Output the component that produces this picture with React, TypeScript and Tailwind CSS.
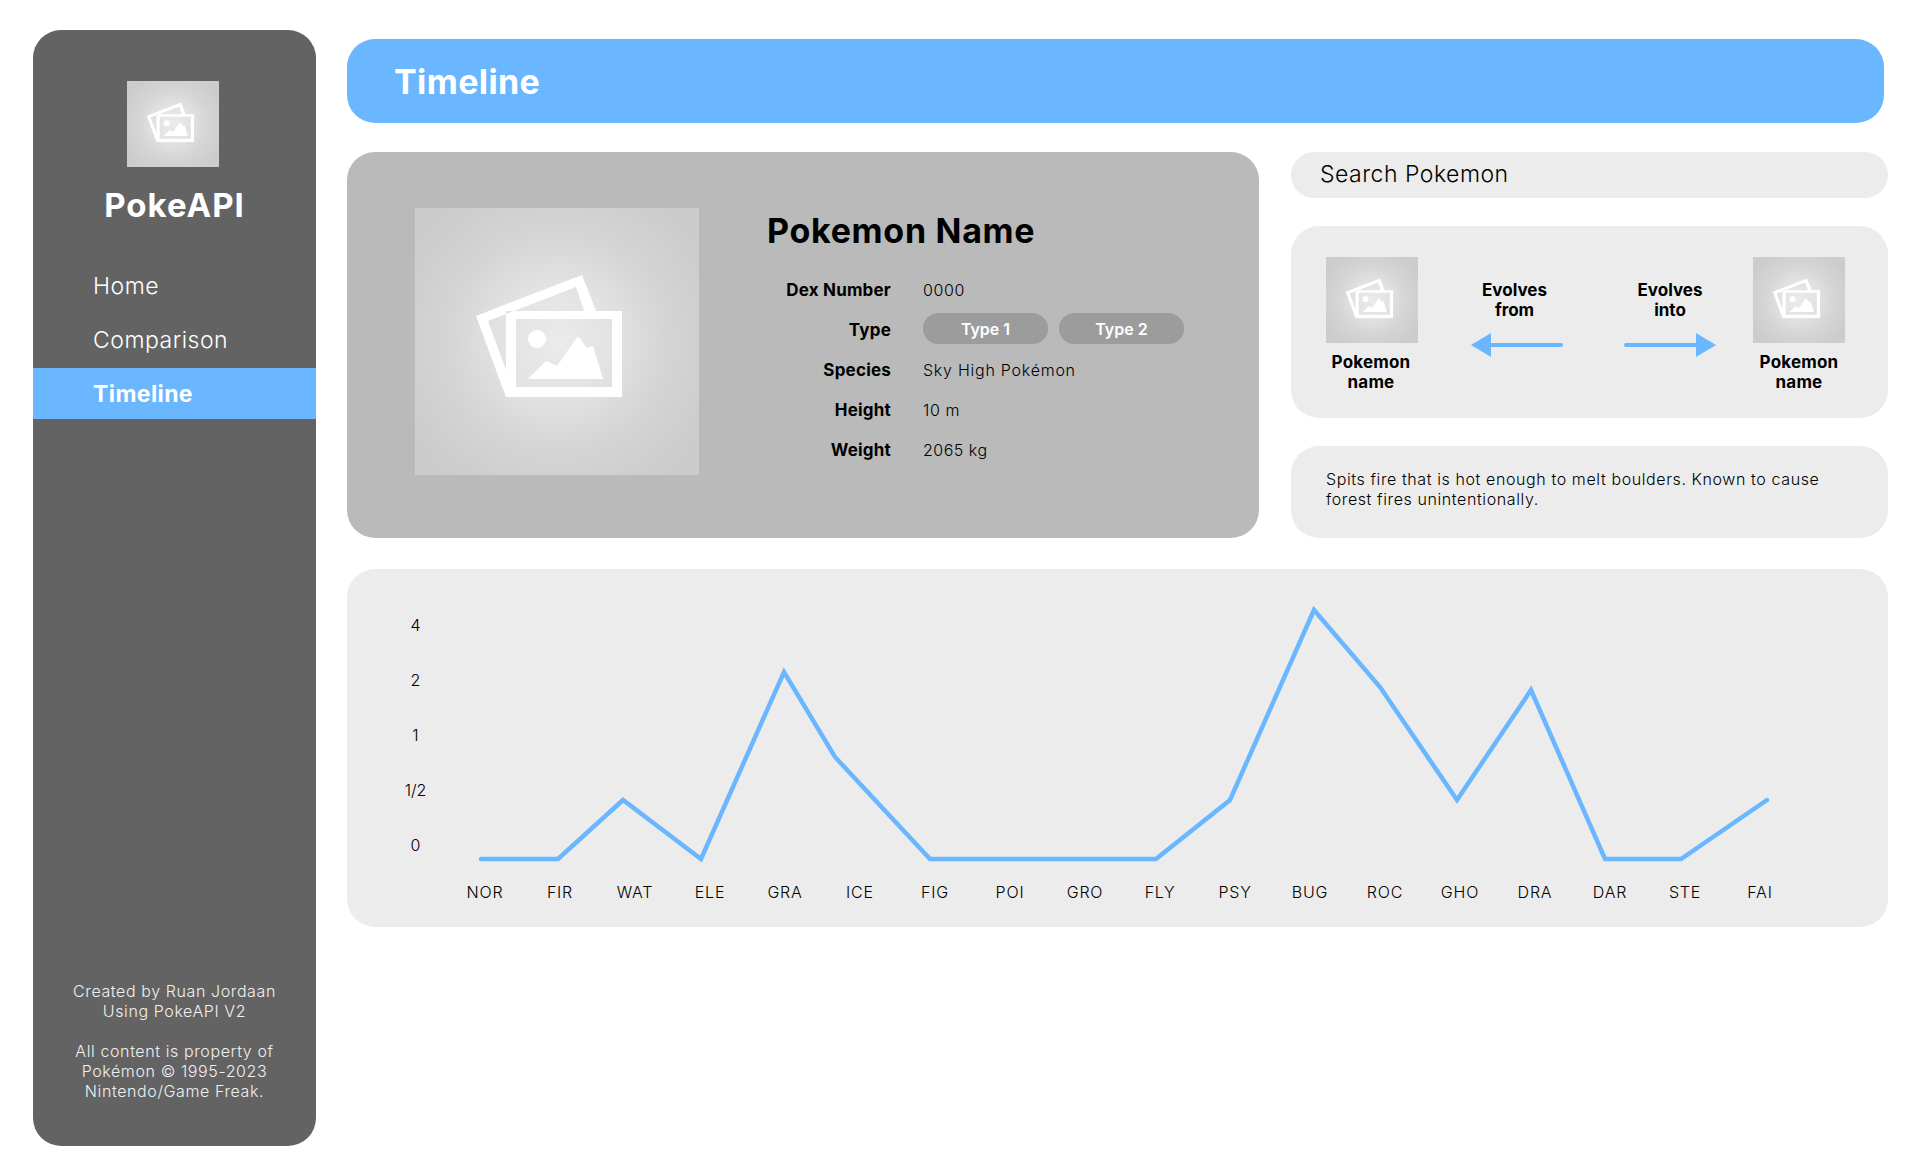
const types = ['NOR', 'FIR', 'WAT', 'ELE', 'GRA', 'ICE', 'FIG', 'POI', 'GRO', 'FLY', 'PSY', 'BUG', 'ROC', 'GHO', 'DRA', 'DAR', 'STE', 'FAI']

// x is page x - 470, y is page y - 600
const linePoints = '11,259 88,259 153,200 231,259 314,72 365,157 460,259 686,259 760,200 844,10 910,87 987,200 1061,90 1135,259 1211,259 1297,200'

function ImagePlaceholder({ className }: { className: string }) {
  return (
    <div className={`shrink-0 bg-[radial-gradient(circle_at_center,#ebebeb_0%,#e2e2e2_30%,#d5d5d5_55%,#cccccc_85%)] ${className}`}>
      <svg viewBox="0 0 284 267" preserveAspectRatio="none" className="block w-full h-full">
        <path
          fill="#ffffff"
          fillRule="evenodd"
          d="M61 108 167 67 181 103H207V189H91ZM73 113 91 162V103H169L161 79ZM101 111V179H197V111Z"
        />
        <circle cx="122" cy="131" r="9" fill="#ffffff" />
        <path fill="#ffffff" d="M113 171 131 153 142 158 163 128 172 140 178 138 188 171Z" />
      </svg>
    </div>
  )
}

function Arrow({ flip }: { flip?: boolean }) {
  return (
    <svg viewBox="0 0 92 24" className={`block w-[92px] h-[24px] ${flip ? '-scale-x-100' : ''}`}>
      <path d="M2 12H74" stroke="#6ab7ff" strokeWidth="4" strokeLinecap="round" />
      <path d="M72 0 92 12 72 24Z" fill="#6ab7ff" />
    </svg>
  )
}

function Sidebar() {
  return (
    <aside className="flex flex-col shrink-0 w-[283px] h-[1116px] mt-[30px] ml-[33px] rounded-[28px] bg-[#636363] overflow-hidden text-white">
      <ImagePlaceholder className="w-[92px] h-[86px] mt-[51px] ml-[94px]" />
      <h1 className="mt-[20px] text-center text-[33px] leading-[36px] font-bold tracking-[1px]">PokeAPI</h1>
      <nav className="mt-[37px] flex flex-col gap-[3px] text-[23px]">
        <a className="flex items-center h-[51px] pt-[2px] pl-[60px] font-light tracking-[0.5px]">Home</a>
        <a className="flex items-center h-[51px] pt-[2px] pl-[60px] font-light tracking-[0.5px]">Comparison</a>
        <a className="flex items-center h-[51px] pt-[2px] pl-[60px] bg-[#6ab7ff] font-bold tracking-[0.4px]">Timeline</a>
      </nav>
      <footer className="mt-auto pb-[45px] text-center text-[16px] leading-[20px] text-[#f0f0f0] font-light tracking-[0.6px]">
        <p>Created by Ruan Jordaan<br />Using PokeAPI V2</p>
        <p className="mt-[20px]">All content is property of<br />Pokémon © 1995-2023<br />Nintendo/Game Freak.</p>
      </footer>
    </aside>
  )
}

function InfoRow({ label, children }: { label: string; children: React.ReactNode }) {
  return (
    <div className="flex items-center h-[40px] gap-[32px] text-[16px]">
      <span className="w-[124px] pt-[2px] text-right text-[17px] font-bold tracking-[0.2px]">{label}</span>
      {children}
    </div>
  )
}

function PokemonCard() {
  return (
    <section className="flex w-[912px] h-[386px] pl-[68px] pt-[56px] rounded-[28px] bg-[#bababa] text-black">
      <ImagePlaceholder className="w-[284px] h-[267px]" />
      <div className="ml-[68px] pt-[3px]">
        <h2 className="text-[34px] leading-[40px] font-bold tracking-[0.7px]">Pokemon Name</h2>
        <div className="mt-[19px]">
          <InfoRow label="Dex Number"><span className="font-light tracking-[0.6px]">0000</span></InfoRow>
          <InfoRow label="Type">
            <div className="flex gap-[11px] -mt-[3px]">
              <span className="flex items-center justify-center w-[125px] h-[31px] rounded-full bg-[#9c9c9c] text-white text-[16px] font-semibold">Type 1</span>
              <span className="flex items-center justify-center w-[125px] h-[31px] rounded-full bg-[#9c9c9c] text-white text-[16px] font-semibold">Type 2</span>
            </div>
          </InfoRow>
          <InfoRow label="Species"><span className="font-light tracking-[0.75px]">Sky High Pokémon</span></InfoRow>
          <InfoRow label="Height"><span className="font-light tracking-[0.6px]">10 m</span></InfoRow>
          <InfoRow label="Weight"><span className="font-light tracking-[0.5px]">2065 kg</span></InfoRow>
        </div>
      </div>
    </section>
  )
}

function PokemonName() {
  return (
    <p className="mt-[9px] text-center text-[17px] leading-[20px] font-bold tracking-[0.2px]">Pokemon<br />name</p>
  )
}

function RightColumn() {
  return (
    <div className="flex flex-col gap-[28px] w-[597px] text-black">
      <div className="flex items-center h-[46px] pl-[29px] pb-[2px] rounded-full bg-[#ececec] text-[23px] font-light tracking-[0.5px]">
        Search Pokemon
      </div>
      <div className="flex h-[192px] pl-[35px] pt-[31px] rounded-[28px] bg-[#ececec]">
        <div className="w-[92px] pr-[2px]">
          <ImagePlaceholder className="w-[92px] h-[86px]" />
          <PokemonName />
        </div>
        <div className="ml-[53px] w-[92px] pt-[23px]">
          <p className="pr-[5px] text-center text-[17px] leading-[20px] font-bold">Evolves<br />from</p>
          <div className="mt-[13px]"><Arrow flip /></div>
        </div>
        <div className="ml-[61px] w-[92px] pt-[23px]">
          <p className="text-center text-[17px] leading-[20px] font-bold">Evolves<br />into</p>
          <div className="mt-[13px]"><Arrow /></div>
        </div>
        <div className="ml-[37px] w-[92px]">
          <ImagePlaceholder className="w-[92px] h-[86px]" />
          <PokemonName />
        </div>
      </div>
      <div className="flex items-center h-[92px] px-[35px] pb-[6px] rounded-[28px] bg-[#ececec] text-[16px] leading-[20px] font-light tracking-[0.6px]">
        <p>Spits fire that is hot enough to melt boulders. Known to cause<br />forest fires unintentionally.</p>
      </div>
    </div>
  )
}

function WeaknessChart() {
  return (
    <section className="mt-[31px] w-[1541px] h-[358px] rounded-[28px] bg-[#ececec] text-black text-[16px] font-light">
      <div className="flex h-[313px]">
        <div className="flex flex-col items-center gap-[35px] w-[123px] pl-[14px] pt-[46px] shrink-0 leading-[20px]">
          <span>4</span>
          <span>2</span>
          <span>1</span>
          <span>1/2</span>
          <span>0</span>
        </div>
        <svg viewBox="0 0 1310 270" className="block w-[1310px] h-[270px] mt-[31px]">
          <polyline points={linePoints} fill="none" stroke="#6ab7ff" strokeWidth="4.5" strokeLinecap="round" strokeLinejoin="miter" />
        </svg>
      </div>
      <div className="flex pl-[100.5px]">
        {types.map(t => (
          <span key={t} className="w-[75px] text-center leading-[20px] tracking-[0.8px]">{t}</span>
        ))}
      </div>
    </section>
  )
}

export default function App() {
  return (
    <div className="flex min-h-screen bg-white font-['Inter',sans-serif]">
      <Sidebar />
      <main className="ml-[31px] pt-[39px]">
        <header className="flex items-center w-[1537px] h-[84px] pl-[47px] rounded-[28px] bg-[#6ab7ff] text-white text-[34px] font-bold tracking-[0.4px]">
          Timeline
        </header>
        <div className="flex gap-[32px] mt-[29px]">
          <PokemonCard />
          <RightColumn />
        </div>
        <WeaknessChart />
      </main>
    </div>
  )
}
